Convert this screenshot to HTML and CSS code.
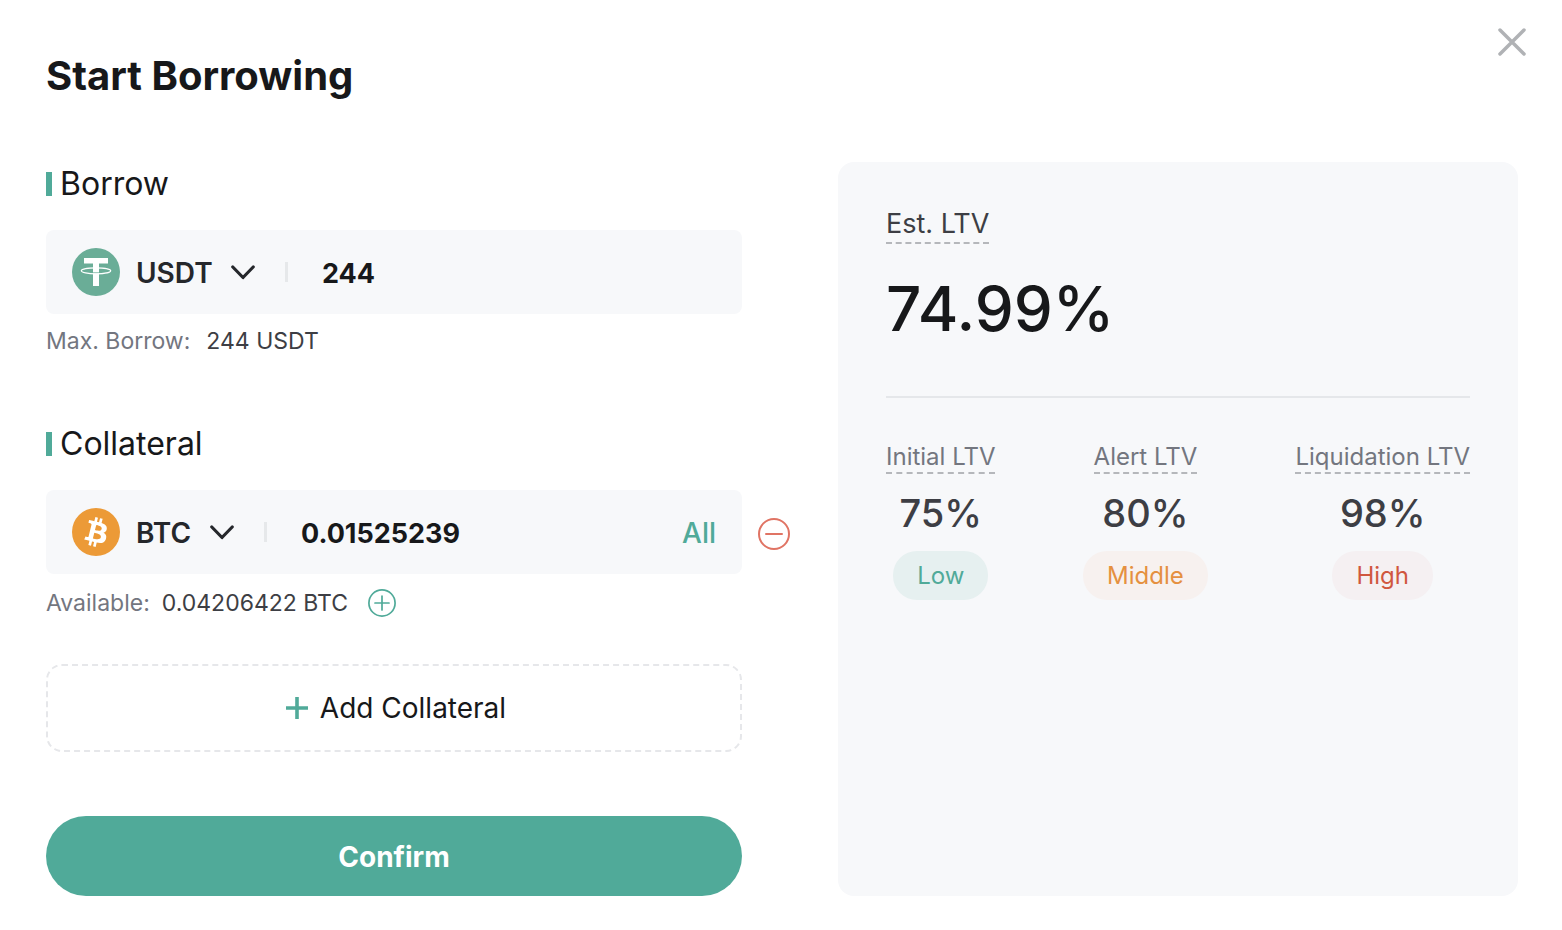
FILE: index.html
```html
<!DOCTYPE html>
<html lang="en">
<head>
<meta charset="utf-8">
<meta name="viewport" content="width=device-width, initial-scale=1">
<title>Start Borrowing</title>
<link rel="stylesheet" href="styles.css">
</head>
<body>
<main class="dialog">
  <header class="dialog-header">
    <h1 class="dialog-title">Start Borrowing</h1>
    <button class="icon-button" type="button" aria-label="Close">
      <svg width="28" height="28" viewBox="0 0 28 28" fill="none" stroke="#b0b2b5" stroke-width="3.500" stroke-linecap="round"><path d="M2 2l24 24M26 2l-24 24"/></svg>
    </button>
  </header>

  <div class="dialog-body">
    <form class="form">
      <section class="section">
        <h2 class="section-title">Borrow</h2>
        <div class="field-row">
          <div class="field">
            <svg class="coin" width="48" height="48" viewBox="0 0 48 48">
              <circle cx="24" cy="24" r="24" fill="#6aad97"/>
              <path d="M12 10h24v5.500h-9V38h-6V15.500h-9z" fill="#fff"/>
              <path d="M21 24.400h6v1h-6z" fill="#6aad97"/>
              <ellipse cx="24" cy="22.800" rx="14.700" ry="3" fill="none" stroke="#fff" stroke-width="1.200"/>
            </svg>
            <select class="coin-select" aria-label="Borrow coin"><option>USDT</option></select>
            <svg class="chevron" width="24" height="16" viewBox="0 0 24 16" fill="none" stroke="#25272b" stroke-width="3.200" stroke-linecap="round" stroke-linejoin="round"><path d="M1.800 3l10.200 10.500 10.200-10.500"/></svg>
            <span class="divider"></span>
            <input class="amount" type="text" inputmode="decimal" value="244" aria-label="Borrow amount">
          </div>
        </div>
        <p class="hint hint-wide"><span class="hint-label">Max. Borrow:</span><span>244 USDT</span></p>
      </section>

      <section class="section">
        <h2 class="section-title">Collateral</h2>
        <div class="field-row">
          <div class="field">
            <svg class="coin" width="48" height="48" viewBox="0 0 32 32">
              <circle cx="16" cy="16" r="16" fill="#ec9a37"/>
              <path fill="#fff" d="M23.189 14.02c.314-2.096-1.283-3.223-3.465-3.975l.708-2.84-1.728-.43-.69 2.765c-.454-.114-.92-.22-1.385-.326l.695-2.783L15.596 6l-.708 2.839c-.376-.086-.746-.17-1.104-.26l.002-.009-2.384-.595-.46 1.846s1.283.294 1.256.312c.7.175.826.638.805 1.006l-.806 3.235c.048.012.11.03.18.057l-.183-.045-1.13 4.532c-.086.212-.303.531-.793.41.018.025-1.256-.313-1.256-.313l-.858 1.978 2.25.561c.418.105.828.215 1.231.318l-.715 2.872 1.727.43.708-2.84c.472.127.93.245 1.378.357l-.706 2.828 1.728.43.715-2.866c2.948.558 5.164.333 6.097-2.333.752-2.146-.037-3.385-1.588-4.192 1.13-.26 1.98-1.003 2.207-2.538zm-3.95 5.538c-.533 2.147-4.148.986-5.32.695l.95-3.805c1.172.293 4.929.872 4.37 3.11zm.535-5.569c-.487 1.953-3.495.96-4.47.717l.86-3.45c.975.243 4.118.696 3.61 2.733z"/>
            </svg>
            <select class="coin-select" aria-label="Collateral coin"><option>BTC</option></select>
            <svg class="chevron" width="24" height="16" viewBox="0 0 24 16" fill="none" stroke="#25272b" stroke-width="3.200" stroke-linecap="round" stroke-linejoin="round"><path d="M1.800 3l10.200 10.500 10.200-10.500"/></svg>
            <span class="divider"></span>
            <input class="amount" type="text" inputmode="decimal" value="0.01525239" aria-label="Collateral amount">
            <button class="all-button" type="button">All</button>
          </div>
          <button class="icon-button remove" type="button" aria-label="Remove collateral">
            <svg width="32" height="32" viewBox="0 0 32 32" fill="none" stroke="#e07464" stroke-width="2"><circle cx="16" cy="16" r="15"/><path d="M8 16h16" stroke-linecap="round"/></svg>
          </button>
        </div>
        <p class="hint hint-available"><span class="hint-label">Available:</span><span>0.04206422 BTC</span>
          <button class="icon-button add-funds" type="button" aria-label="Add funds">
            <svg width="28" height="28" viewBox="0 0 28 28" fill="none" stroke="#50aa99" stroke-width="1.700"><circle cx="14" cy="14" r="13.100"/><path d="M7 14h14M14 7v14" stroke-linecap="round"/></svg>
          </button>
        </p>
      </section>

      <button class="add-collateral" type="button">
        <svg width="22" height="22" viewBox="0 0 22 22" stroke="#50aa99" stroke-width="3.600"><path d="M0 11h22M11 0v22"/></svg>
        Add Collateral
      </button>
      <button class="confirm" type="button">Confirm</button>
    </form>

    <aside class="panel">
      <h2 class="term term-large">Est. LTV</h2>
      <p class="ltv-value">74.99%</p>
      <div class="levels">
        <div class="level">
          <h3 class="term">Initial LTV</h3>
          <p class="level-value">75%</p>
          <span class="pill pill-low">Low</span>
        </div>
        <div class="level">
          <h3 class="term">Alert LTV</h3>
          <p class="level-value">80%</p>
          <span class="pill pill-middle">Middle</span>
        </div>
        <div class="level">
          <h3 class="term">Liquidation LTV</h3>
          <p class="level-value">98%</p>
          <span class="pill pill-high">High</span>
        </div>
      </div>
    </aside>
  </div>
</main>
</body>
</html>
```
FILE: styles.css
```css
* {
  box-sizing: border-box;
}

body,
h1,
h2,
h3,
p {
  margin: 0;
}

body {
  background: #fff;
  color: #17181a;
  font-family: Inter, "Liberation Sans", sans-serif;
  font-size: 24px;
}

button,
input,
select {
  padding: 0;
  border: 0;
  background: none;
  color: inherit;
  font: inherit;
}

button {
  cursor: pointer;
}

svg {
  display: block;
  flex: none;
}

.dialog-header {
  display: flex;
  justify-content: space-between;
  align-items: flex-start;
  padding: 28px 36px 58px 46px;
}

.dialog-title {
  margin-top: 20px;
  font-size: 40px;
  font-weight: 700;
  line-height: 56px;
}

.icon-button {
  flex: none;
}

.dialog-body {
  display: grid;
  grid-template-columns: 744fr 680fr;
  gap: 48px;
  padding: 0 44px 34px 46px;
}

.form {
  display: flex;
  flex-direction: column;
  min-width: 0;
}

.section + .section {
  margin-top: 65px;
}

.section-title {
  display: flex;
  align-items: center;
  gap: 8px;
  margin-bottom: 24px;
  font-size: 32px;
  font-weight: 400;
  line-height: 44px;
}

.section-title::before {
  content: "";
  width: 6px;
  height: 24px;
  background: #50aa99;
}

.field-row {
  display: grid;
  grid-template-columns: minmax(0, 1fr) 32px;
  align-items: center;
  gap: 16px;
}

.field {
  display: flex;
  align-items: center;
  height: 84px;
  padding: 0 26px;
  border-radius: 8px;
  background: #f7f8fa;
  font-size: 28px;
  font-weight: 600;
}

.coin-select {
  margin: 0 18px 0 16px;
  padding-top: 2px;
  appearance: none;
  color: #25272b;
}

.divider {
  flex: none;
  width: 3px;
  height: 20px;
  margin: 0 34px 0 30px;
  background: #e6e8ea;
}

.amount {
  flex: 1;
  min-width: 0;
  padding-top: 2px;
  outline: 0;
  font-size: 27px;
  font-weight: 700;
}

.all-button {
  padding-top: 2px;
  color: #50aa99;
  font-weight: 500;
}

.remove {
  padding-top: 4px;
}

.hint {
  display: flex;
  align-items: center;
  gap: 12px;
  color: #3d3e44;
  font-size: 23px;
  line-height: 32px;
}

.hint-wide {
  gap: 16px;
  padding-top: 11px;
}

.hint-available {
  padding-top: 13px;
}

.hint-label {
  color: #73767f;
}

.add-funds {
  margin-left: 8px;
}

.add-collateral,
.confirm {
  display: flex;
  justify-content: center;
  align-items: center;
  margin-right: 48px;
  font-size: 28px;
}

.add-collateral {
  gap: 12px;
  height: 88px;
  margin-top: 45px;
  padding-left: 4px;
  border: 2px dashed #e6e7ea;
  border-radius: 16px;
}

.confirm {
  height: 80px;
  margin-top: 64px;
  padding-top: 2px;
  border-radius: 40px;
  background: #50aa99;
  color: #fff;
  font-weight: 700;
}

.panel {
  min-width: 0;
  padding: 44px 48px;
  border-radius: 16px;
  background: #f7f8fa;
}

.term {
  width: fit-content;
  border-bottom: 2px dashed #b5b7bb;
  color: #73767f;
  font-size: 24px;
  font-weight: 400;
  line-height: 30px;
}

.term-large {
  color: #3d3e44;
  font-size: 27px;
  line-height: 36px;
}

.ltv-value {
  margin: 25px 0 47px;
  font-size: 62px;
  font-weight: 500;
  line-height: 80px;
}

.levels {
  display: flex;
  justify-content: space-between;
  padding-top: 44px;
  border-top: 2px solid #e5e7ea;
}

.level {
  display: flex;
  flex-direction: column;
  align-items: center;
}

.level-value {
  margin: 15px 0 14px;
  color: #3d3e44;
  font-size: 38px;
  font-weight: 500;
  line-height: 48px;
}

.pill {
  padding: 1px 24px 0;
  border-radius: 24px;
  line-height: 48px;
}

.pill-low {
  background: #e6f0f0;
  color: #50aa99;
}

.pill-middle {
  background: #f7f1ef;
  color: #e59040;
}

.pill-high {
  background: #f5f0f2;
  color: #d0573f;
}
```
